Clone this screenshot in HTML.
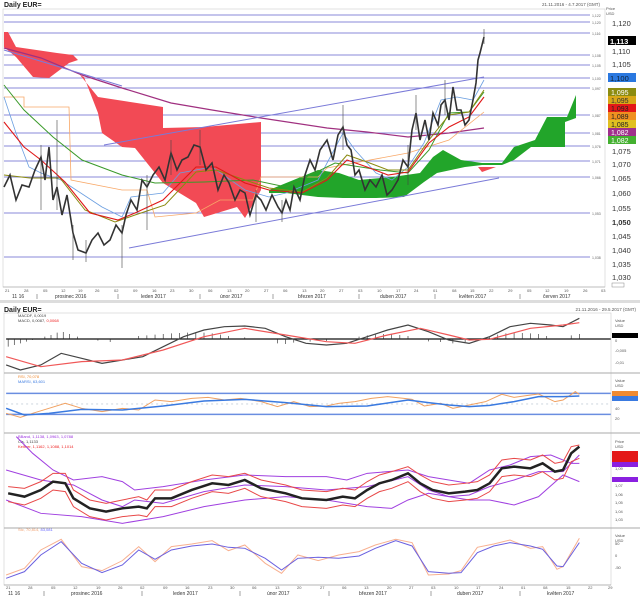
<!DOCTYPE html>
<html><head><meta charset="utf-8"><style>
html,body{margin:0;padding:0;background:#fff;width:640px;height:599px;overflow:hidden}
svg{display:block;font-family:"Liberation Sans",sans-serif}
.ns{vector-effect:non-scaling-stroke;fill:none}
</style></head><body>
<svg width="640" height="599" viewBox="0 0 640 599">
<rect width="640" height="599" fill="#fff"/>
<!-- TOP CHART -->
<text x="4" y="7" font-size="7" font-weight="bold" fill="#222">Daily EUR=</text>
<text x="600" y="6" font-size="4.5" fill="#555" text-anchor="end">21.11.2016 - 4.7.2017 (GMT)</text>
<rect x="3" y="9" width="602" height="278" fill="none" stroke="#ccc" stroke-width="0.6"/>
<g stroke="#8a8ad8" stroke-width="1">
<line x1="4" y1="15" x2="590" y2="15"/><line x1="4" y1="22" x2="590" y2="22"/><line x1="4" y1="33" x2="590" y2="33"/>
<line x1="4" y1="55" x2="590" y2="55"/><line x1="4" y1="65" x2="590" y2="65"/><line x1="4" y1="78" x2="590" y2="78"/>
<line x1="4" y1="88" x2="590" y2="88"/><line x1="4" y1="115" x2="590" y2="115"/><line x1="4" y1="133" x2="590" y2="133"/>
<line x1="4" y1="146" x2="590" y2="146"/><line x1="4" y1="161" x2="590" y2="161"/><line x1="4" y1="177" x2="590" y2="177"/>
<line x1="4" y1="213" x2="590" y2="213"/><line x1="4" y1="257" x2="590" y2="257"/>
</g>
<g font-size="3.5" fill="#666">
<text x="592" y="17">1,122</text><text x="592" y="24">1,120</text><text x="592" y="35">1,116</text><text x="592" y="57">1,108</text>
<text x="592" y="67">1,105</text><text x="592" y="80">1,100</text><text x="592" y="90">1,097</text><text x="592" y="117">1,087</text>
<text x="592" y="135">1,081</text><text x="592" y="148">1,076</text><text x="592" y="163">1,071</text><text x="592" y="179">1,066</text>
<text x="592" y="215">1,053</text><text x="592" y="259">1,038</text>
</g>
<!-- clouds -->
<polygon fill="#f24a55" points="4,32 8,32 16,47 57,53 73,55 78,60 69,63 49,78 33,77 16,57 4,47"/>
<polygon fill="#f24a55" points="80,75 98,97 163,107 163,128 204,127 261,122 261,190 245,218 237,207 204,217 196,203 163,183 135,148 122,147 102,133 98,113 84,77"/>
<polygon fill="#22a52a" points="269,190 318,170 339,173 359,180 392,177 420,173 433,157 443,150 461,160 482,163 502,163 514,147 535,140 547,117 567,117 576,95 576,118 565,122 565,147 531,147 514,160 502,165 482,165 465,167 437,173 424,182 404,197 376,198 343,198 318,197 286,193 269,193"/>
<polygon fill="#f24a55" points="478,167 496,167 482,172"/>
<!-- lines -->
<polyline fill="none" stroke="#a03080" stroke-width="1.2" points="4,48 41,58 82,75 122,88 171,103 212,110 261,118 327,128 367,132 408,137 449,133 484,128"/>
<line x1="4" y1="50" x2="122" y2="86" stroke="#7a7ad8" stroke-width="1"/>
<line x1="104" y1="145" x2="484" y2="77" stroke="#7a7ad8" stroke-width="1"/>
<line x1="129" y1="248" x2="499" y2="178" stroke="#7a7ad8" stroke-width="1"/>
<polyline fill="none" stroke="#f8a868" stroke-width="0.8" points="4,97 24,97 24,107 69,107 71,180 122,190 147,190 155,217 196,213 220,200 253,200 261,177 318,177 327,168 408,153 449,140 484,112"/>
<polyline fill="none" stroke="#6a9ee0" stroke-width="0.8" points="4,97 16,133 29,167 41,173 61,180 102,207 122,217 131,197 163,193 180,173 212,167 245,190 269,197 286,193 318,180 343,133 355,150 376,173 392,180 408,167 424,143 441,100 457,97 473,100 484,80"/>
<polyline fill="none" stroke="#3a9a2a" stroke-width="1" points="4,85 24,110 53,137 82,160 122,175 155,183 204,182 253,180 286,187 335,163 380,170 408,173 429,150 449,113 469,112 484,92"/>
<polyline fill="none" stroke="#8a8a10" stroke-width="1" points="4,175 30,178 60,178 85,210 115,222 135,215 165,205 196,172 216,170 245,180 269,188 302,192 327,178 347,155 367,162 388,170 408,170 429,140 449,115 469,112 484,90"/>
<polyline fill="none" stroke="#e01818" stroke-width="1.1" points="4,122 24,147 41,160 65,182 90,213 118,220 135,213 163,200 196,167 216,167 245,183 269,190 302,193 327,180 347,160 367,167 388,175 408,172 429,143 449,127 469,117 484,97"/>
<!-- price -->
<polyline fill="none" stroke="#333" stroke-width="1.6" points="4,187 10,175 16,200 22,185 29,187 35,170 41,157 45,180 49,147 53,200 57,187 62,215 67,195 73,233 78,250 86,253 92,240 98,233 104,245 110,240 116,225 122,233 126,215 131,200 137,210 142,180 147,187 153,175 159,167 165,180 171,153 177,170 182,160 188,157 194,145 200,147 206,170 212,163 218,190 224,175 229,183 235,200 240,190 245,193 250,215 256,195 261,200 266,210 272,195 278,207 282,213 286,200 290,210 294,187 300,200 305,175 310,160 315,170 320,150 327,140 333,160 338,135 343,127 347,145 351,150 355,175 359,170 365,190 370,180 376,187 382,175 387,195 392,190 398,180 403,160 408,167 412,130 416,113 420,140 425,120 429,140 433,113 438,125 441,105 445,100 449,120 453,87 457,110 461,110 465,125 469,120 473,100 476,83 478,60 480,53 482,45 484,37"/>
<g stroke="#444" stroke-width="0.6">
<line x1="41" y1="145" x2="41" y2="210"/><line x1="57" y1="120" x2="57" y2="210"/><line x1="73" y1="225" x2="73" y2="260"/><line x1="86" y1="240" x2="86" y2="262"/><line x1="122" y1="225" x2="122" y2="268"/><line x1="147" y1="175" x2="147" y2="230"/><line x1="171" y1="140" x2="171" y2="175"/><line x1="200" y1="130" x2="200" y2="165"/><line x1="256" y1="190" x2="256" y2="222"/><line x1="282" y1="200" x2="282" y2="222"/><line x1="343" y1="105" x2="343" y2="150"/><line x1="408" y1="145" x2="408" y2="185"/><line x1="416" y1="95" x2="416" y2="130"/><line x1="445" y1="80" x2="445" y2="115"/><line x1="484" y1="29" x2="484" y2="44"/>
</g>
<!-- price axis -->
<text x="606" y="10" font-size="4" fill="#555">Price</text><text x="606" y="15" font-size="4" fill="#555">USD</text>
<g font-size="7.5" fill="#333">
<text x="612" y="26">1,120</text><text x="612" y="54">1,110</text><text x="612" y="67">1,105</text>
<text x="612" y="154">1,075</text><text x="612" y="167">1,070</text><text x="612" y="181">1,065</text><text x="612" y="196">1,060</text>
<text x="612" y="211">1,055</text><text x="612" y="225" font-weight="bold">1,050</text><text x="612" y="239">1,045</text><text x="612" y="253">1,040</text>
<text x="612" y="267">1,035</text><text x="612" y="280">1,030</text>
</g>
<rect x="608" y="36" width="28" height="9" fill="#000"/><text x="610" y="44" font-size="7.5" fill="#fff" font-weight="bold">1,113</text>
<rect x="608" y="73" width="28" height="9" fill="#2a78e0"/><text x="610" y="81" font-size="7.5" fill="#123">1,100</text>
<rect x="608" y="88" width="28" height="8" fill="#8c8c10"/><text x="611" y="95" font-size="7" fill="#fff">1,095</text>
<rect x="608" y="96" width="28" height="8" fill="#d8a818"/><text x="611" y="103" font-size="7" fill="#333">1,095</text>
<rect x="608" y="104" width="28" height="8" fill="#e41818"/><text x="611" y="111" font-size="7" fill="#222">1,093</text>
<rect x="608" y="112" width="28" height="8" fill="#f09020"/><text x="611" y="119" font-size="7" fill="#222">1,089</text>
<rect x="608" y="120" width="28" height="8" fill="#e0c020"/><text x="611" y="127" font-size="7" fill="#222">1,085</text>
<rect x="608" y="128" width="28" height="8" fill="#a0308c"/><text x="611" y="135" font-size="7" fill="#fff">1,082</text>
<rect x="608" y="136" width="28" height="8" fill="#44b030"/><text x="611" y="143" font-size="7" fill="#fff">1,082</text>
<rect x="612" y="283" width="12" height="4" fill="none" stroke="#888" stroke-width="0.5"/>
<!-- top x axis -->
<line x1="3" y1="287" x2="605" y2="287" stroke="#999" stroke-width="0.6"/>
<g font-size="4" fill="#555">
<text x="5" y="292">21</text><text x="24" y="292">28</text><text x="43" y="292">05</text><text x="61" y="292">12</text><text x="78" y="292">19</text><text x="95" y="292">26</text><text x="114" y="292">02</text><text x="133" y="292">09</text><text x="152" y="292">16</text><text x="170" y="292">23</text><text x="189" y="292">30</text><text x="208" y="292">06</text><text x="227" y="292">13</text><text x="245" y="292">20</text><text x="264" y="292">27</text><text x="283" y="292">06</text><text x="302" y="292">13</text><text x="320" y="292">20</text><text x="339" y="292">27</text><text x="358" y="292">03</text><text x="377" y="292">10</text><text x="396" y="292">17</text><text x="414" y="292">24</text><text x="433" y="292">01</text><text x="452" y="292">08</text><text x="470" y="292">15</text><text x="489" y="292">22</text><text x="508" y="292">29</text><text x="527" y="292">05</text><text x="545" y="292">12</text><text x="564" y="292">19</text><text x="583" y="292">26</text><text x="601" y="292">03</text>
</g>
<g font-size="5" fill="#333">
<text x="12" y="298">11 16</text><text x="55" y="298">prosinec 2016</text><text x="141" y="298">leden 2017</text><text x="220" y="298">únor 2017</text><text x="298" y="298">březen 2017</text><text x="380" y="298">duben 2017</text><text x="459" y="298">květen 2017</text><text x="543" y="298">červen 2017</text>
</g>
<g stroke="#666" stroke-width="0.6"><line x1="37" y1="294" x2="37" y2="299"/><line x1="118" y1="294" x2="118" y2="299"/><line x1="200" y1="294" x2="200" y2="299"/><line x1="273" y1="294" x2="273" y2="299"/><line x1="359" y1="294" x2="359" y2="299"/><line x1="435" y1="294" x2="435" y2="299"/><line x1="520" y1="294" x2="520" y2="299"/></g>

<!-- BOTTOM -->
<rect x="0" y="300" width="640" height="3" fill="#ddd"/>
<text x="4" y="312" font-size="7" font-weight="bold" fill="#222">Daily EUR=</text>
<text x="636" y="311" font-size="4.5" fill="#555" text-anchor="end">21.11.2016 - 29.5.2017 (GMT)</text>
<rect x="4" y="313" width="607" height="272" fill="none" stroke="#ccc" stroke-width="0.6"/>
<g stroke="#aaa" stroke-width="1"><line x1="4" y1="373" x2="640" y2="373"/><line x1="4" y1="433" x2="640" y2="433"/><line x1="4" y1="528" x2="640" y2="528"/></g>
<line x1="4" y1="585" x2="611" y2="585" stroke="#888" stroke-width="0.6"/>
<g font-size="4" fill="#444">
<text x="18" y="317">MACDF, 0,0019</text><text x="18" y="322">MACD, 0,0087, <tspan fill="#e22">0,0068</tspan></text>
<text x="18" y="378" fill="#f08a30">RSI, 70,078</text><text x="18" y="383" fill="#3a7ae0">MARSI, 63,601</text>
<text x="18" y="438" fill="#9a30e0">BBand, 1,1138, 1,0963, 1,0788</text><text x="18" y="443">Cls, 1,1133</text><text x="18" y="448" fill="#e22">Keltner, 1,1162, 1,1088, 1,1014</text>
<text x="18" y="531" fill="#f0a070">Stc, 70,814, <tspan fill="#66f">83,081</tspan></text>
</g>
<g transform="translate(0,300) scale(0.408,0.3333)">
<!-- MACD -->
<line class="ns" x1="15" y1="117" x2="1497" y2="117" stroke="#111" stroke-width="1.2"/>
<path class="ns" stroke="#222" stroke-width="0.6" d="M20 117V140M35 117V135M50 117V130M65 117V125M80 117V120M110 117V110M125 117V105M140 117V98M155 117V96M170 117V102M190 117V110M240 117V122M270 117V126M340 117V108M360 117V106M380 117V104M400 117V102M420 117V100M440 117V99M460 117V98M480 117V97M500 117V98M520 117V100M540 117V104M560 117V108M600 117V112M680 117V130M700 117V132M720 117V128M760 117V125M800 117V123M880 117V110M900 117V106M920 117V103M940 117V102M960 117V103M980 117V105M1000 117V108M1050 117V124M1080 117V126M1110 117V130M1140 117V126M1200 117V112M1220 117V104M1240 117V100M1260 117V98M1280 117V99M1300 117V100M1320 117V102M1340 117V108M1400 117V106M1420 117V102"/>
<polyline class="ns" stroke="#444" stroke-width="1.2" points="15,195 50,210 100,195 150,160 200,175 250,190 300,180 350,170 400,140 450,110 500,90 550,80 600,78 650,85 700,110 750,130 800,135 850,130 900,110 950,90 1000,75 1050,95 1100,120 1150,130 1200,110 1250,80 1300,70 1350,75 1380,80 1420,55"/>
<polyline class="ns" stroke="#f05858" stroke-width="1.2" points="15,170 100,200 200,185 300,180 400,150 500,110 600,85 700,105 800,125 870,130 950,105 1030,85 1100,105 1150,120 1200,118 1300,85 1380,75 1420,68"/>
<!-- RSI -->
<line class="ns" x1="15" y1="280" x2="1497" y2="280" stroke="#6a8ee0" stroke-width="1.5"/>
<line class="ns" x1="15" y1="343" x2="1497" y2="343" stroke="#6a8ee0" stroke-width="1.5"/>
<line class="ns" x1="15" y1="312" x2="1497" y2="312" stroke="#9ab" stroke-width="0.5" stroke-dasharray="2,3"/>
<polyline class="ns" stroke="#f0a060" stroke-width="1" points="15,340 50,352 80,340 120,325 160,310 200,325 250,335 300,325 340,330 380,300 420,305 470,295 510,292 550,300 590,295 640,305 680,320 720,305 760,320 800,318 830,310 870,305 910,295 950,290 990,295 1010,298 1040,318 1080,310 1110,325 1150,315 1190,305 1230,283 1260,292 1290,287 1320,282 1360,305 1380,300 1410,275 1420,283"/>
<polyline class="ns" stroke="#3a7ae0" stroke-width="1.5" points="15,325 60,345 120,340 200,328 300,330 400,318 500,303 600,298 700,308 800,320 900,318 1000,300 1050,308 1100,315 1150,320 1200,316 1260,305 1320,290 1380,290 1420,288"/>
<!-- BBand -->
<polyline class="ns" stroke="#a040e0" stroke-width="1" points="40,410 80,460 130,510 180,540 250,530 300,545 330,570 400,560 500,540 600,525 700,530 800,530 850,540 900,520 1000,510 1050,530 1100,540 1150,550 1200,510 1250,495 1300,470 1350,465 1400,490 1420,490"/>
<polyline class="ns" stroke="#a040e0" stroke-width="1" points="15,510 100,540 180,555 250,600 300,620 330,600 400,610 500,575 600,555 700,560 800,570 900,560 1000,530 1050,570 1100,590 1150,585 1200,560 1260,540 1320,515 1380,515 1420,465"/>
<polyline class="ns" stroke="#a040e0" stroke-width="1" points="15,600 100,640 200,650 300,670 400,650 500,620 600,600 700,590 800,600 900,620 960,625 1000,600 1050,580 1100,590 1150,600 1200,600 1260,615 1320,590 1380,525 1420,545"/>
<polyline class="ns" stroke="#e84848" stroke-width="1" points="20,560 60,565 100,545 130,520 160,520 180,570 220,600 260,610 300,600 340,590 360,600 380,570 420,570 470,545 520,525 560,530 600,520 640,540 700,555 740,570 800,575 840,565 870,570 900,545 930,525 960,515 1000,500 1030,525 1060,545 1100,555 1140,550 1170,545 1200,525 1230,480 1260,475 1300,480 1330,465 1360,490 1380,485 1400,440 1420,435"/>
<polyline class="ns" stroke="#e84848" stroke-width="1" points="20,605 60,615 100,595 130,570 160,575 180,620 220,650 260,660 300,650 340,645 360,650 380,620 420,620 470,595 520,575 560,580 600,565 640,590 700,605 740,620 800,625 840,615 870,620 900,595 930,575 960,565 1000,545 1030,575 1060,595 1100,605 1140,600 1170,595 1200,575 1230,530 1260,525 1300,530 1330,515 1360,540 1380,535 1400,485 1420,475"/>
<polyline class="ns" stroke="#222" stroke-width="2.5" points="20,580 60,590 100,570 130,545 160,550 180,595 220,625 260,635 300,625 340,620 360,625 380,595 420,595 470,570 520,550 560,555 600,540 640,565 700,580 740,595 800,600 840,590 870,595 900,570 930,550 960,540 1000,520 1030,550 1060,570 1100,580 1140,575 1170,570 1200,550 1230,505 1260,500 1300,505 1330,490 1360,515 1380,510 1400,460 1420,440"/>
<!-- Stoch -->
<polyline class="ns" stroke="#f8b090" stroke-width="1" points="15,825 60,805 100,750 150,718 200,800 250,812 300,782 340,740 380,785 420,740 470,732 520,722 560,752 600,735 650,790 690,820 730,765 780,782 830,765 880,755 920,735 970,718 1010,728 1050,825 1100,822 1130,812 1170,742 1210,732 1250,720 1300,745 1330,740 1365,808 1380,800 1420,715"/>
<polyline class="ns" stroke="#6a60e0" stroke-width="1" points="15,835 60,815 100,765 150,725 200,790 250,818 300,795 340,750 380,778 420,750 470,738 520,732 560,742 600,745 650,775 690,810 730,775 780,772 830,775 880,768 920,745 970,722 1010,738 1050,815 1100,820 1130,818 1170,758 1210,738 1250,728 1300,738 1330,748 1365,798 1380,800 1420,728"/>
</g>
<!-- lower right axis -->
<g font-size="4" fill="#555">
<text x="615" y="322">Value</text><text x="615" y="327">USD</text><text x="615" y="352">-0,005</text><text x="615" y="364">-0,01</text><text x="615" y="342">0</text>
<text x="615" y="382">Value</text><text x="615" y="387">USD</text><text x="615" y="410">40</text><text x="615" y="420">20</text>
<text x="615" y="443">Price</text><text x="615" y="448">USD</text><text x="615" y="470">1,09</text><text x="615" y="487">1,07</text><text x="615" y="496">1,06</text><text x="615" y="504">1,05</text><text x="615" y="513">1,04</text><text x="615" y="521">1,03</text>
<text x="615" y="537">Value</text><text x="615" y="542">USD</text><text x="615" y="557">0</text><text x="615" y="569">-50</text><text x="615" y="545">50</text>
</g>
<rect x="612" y="333" width="26" height="5" fill="#000"/>
<rect x="612" y="391" width="26" height="5" fill="#f08a30"/><rect x="612" y="396" width="26" height="5" fill="#3a7ae0"/>
<rect x="612" y="451" width="26" height="6" fill="#e41818"/><rect x="612" y="457" width="26" height="5" fill="#e41818"/><rect x="612" y="462" width="26" height="5" fill="#8a20e0"/><rect x="612" y="477" width="26" height="5" fill="#8a20e0"/>
<!-- lower x axis -->
<g font-size="4" fill="#555">
<text x="6" y="589">21</text><text x="28" y="589">28</text><text x="51" y="589">05</text><text x="73" y="589">12</text><text x="96" y="589">19</text><text x="118" y="589">26</text><text x="140" y="589">02</text><text x="163" y="589">09</text><text x="185" y="589">16</text><text x="208" y="589">23</text><text x="230" y="589">30</text><text x="252" y="589">06</text><text x="275" y="589">13</text><text x="297" y="589">20</text><text x="320" y="589">27</text><text x="342" y="589">06</text><text x="364" y="589">13</text><text x="387" y="589">20</text><text x="409" y="589">27</text><text x="431" y="589">03</text><text x="454" y="589">10</text><text x="476" y="589">17</text><text x="499" y="589">24</text><text x="521" y="589">01</text><text x="543" y="589">08</text><text x="566" y="589">15</text><text x="588" y="589">22</text><text x="608" y="589">29</text>
</g>
<g font-size="5" fill="#333">
<text x="8" y="595">11 16</text><text x="71" y="595">prosinec 2016</text><text x="173" y="595">leden 2017</text><text x="267" y="595">únor 2017</text><text x="359" y="595">březen 2017</text><text x="457" y="595">duben 2017</text><text x="547" y="595">květen 2017</text>
</g>
<g stroke="#666" stroke-width="0.6"><line x1="44" y1="591" x2="44" y2="596"/><line x1="142" y1="591" x2="142" y2="596"/><line x1="240" y1="591" x2="240" y2="596"/><line x1="329" y1="591" x2="329" y2="596"/><line x1="431" y1="591" x2="431" y2="596"/><line x1="520" y1="591" x2="520" y2="596"/></g>
</svg>
</body></html>
